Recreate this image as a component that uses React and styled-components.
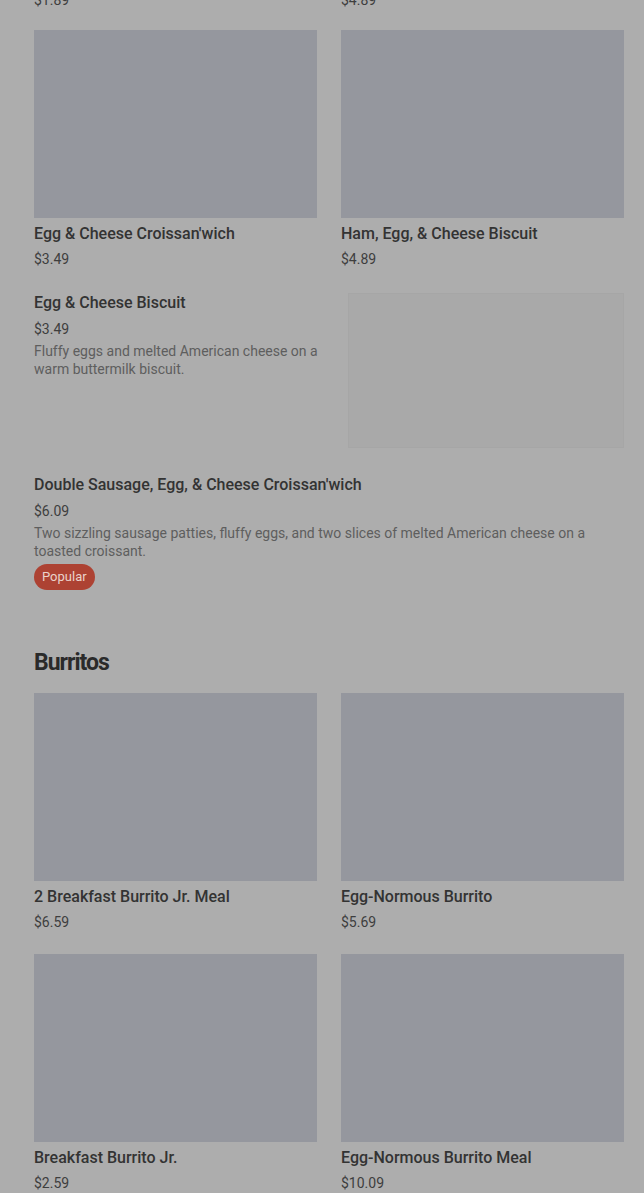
import React from "react"
import styled, { createGlobalStyle } from "styled-components"

const GlobalStyle = createGlobalStyle`
  html, body {
    margin: 0;
    padding: 0;
    background: #adadad;
    font-family: Roboto, "Liberation Sans", sans-serif;
    overflow: hidden;
  }
`

const gridTop = [
  { price: "$1.89" },
  { price: "$4.89" },
]

const gridOne = [
  { name: "Egg & Cheese Croissan'wich", price: "$3.49" },
  { name: "Ham, Egg, & Cheese Biscuit", price: "$4.89" },
]

const burritos = [
  { name: "2 Breakfast Burrito Jr. Meal", price: "$6.59" },
  { name: "Egg-Normous Burrito", price: "$5.69" },
  { name: "Breakfast Burrito Jr.", price: "$2.59" },
  { name: "Egg-Normous Burrito Meal", price: "$10.09" },
]

export default function App() {
  return (
    <>
      <GlobalStyle />
      <Page>
        <Grid $cut>
          {gridTop.map((it, i) => (
            <Price key={i}>{it.price}</Price>
          ))}
        </Grid>

        <Grid>
          {gridOne.map((it) => (
            <Card key={it.name}>
              <Thumb />
              <Title>{it.name}</Title>
              <Price>{it.price}</Price>
            </Card>
          ))}
        </Grid>

        <ListItem>
          <ListText>
            <Title>Egg &amp; Cheese Biscuit</Title>
            <Price $list>$3.49</Price>
            <Desc>Fluffy eggs and melted American cheese on a warm buttermilk biscuit.</Desc>
          </ListText>
          <FaintThumb />
        </ListItem>

        <ListItem $last>
          <ListText>
            <Title>Double Sausage, Egg, &amp; Cheese Croissan'wich</Title>
            <Price $list>$6.09</Price>
            <Desc>Two sizzling sausage patties, fluffy eggs, and two slices of melted American cheese on a toasted croissant.</Desc>
            <Badge>Popular</Badge>
          </ListText>
        </ListItem>

        <Heading>Burritos</Heading>

        <Grid>
          {burritos.map((it) => (
            <Card key={it.name}>
              <Thumb />
              <Title>{it.name}</Title>
              <Price>{it.price}</Price>
            </Card>
          ))}
        </Grid>
      </Page>
    </>
  )
}

const Page = styled.div`
  width: 644px;
  height: 1193px;
  overflow: hidden;
  box-sizing: border-box;
  padding: 0 20px 0 34px;
`

const Grid = styled.div`
  display: grid;
  grid-template-columns: 283px 283px;
  column-gap: 24px;
  row-gap: 22px;
  margin-top: ${(p) => (p.$cut ? "-15px" : "0")};
  margin-bottom: ${(p) => (p.$cut ? "20px" : "24px")};
`

const Card = styled.div`
  display: flex;
  flex-direction: column;
`

const Thumb = styled.div`
  height: 188px;
  background: #95979e;
  margin-bottom: 6px;
`

const Title = styled.div`
  font-size: 16px;
  line-height: 20px;
  font-weight: 500;
  color: #333333;
`

const Price = styled.div`
  font-size: 14px;
  line-height: 20px;
  color: #3e3e3e;
  margin-top: ${(p) => (p.$list ? "6px" : "5px")};
`

const Desc = styled.div`
  font-size: 14px;
  line-height: 18px;
  color: #5e5e5e;
  margin-top: 3px;
  padding-right: 4px;
`

const ListItem = styled.div`
  display: flex;
  gap: 14px;
  margin-bottom: ${(p) => (p.$last ? "59px" : "27px")};
`

const ListText = styled.div`
  flex: 1;
  display: flex;
  flex-direction: column;
  align-items: flex-start;
`

const FaintThumb = styled.div`
  width: 276px;
  height: 155px;
  flex-shrink: 0;
  background: #a9a9a9;
  box-shadow: inset 0 0 0 1px #a6a6a6;
`

const Badge = styled.span`
  margin-top: 4px;
  height: 26px;
  padding: 0 8px;
  border-radius: 13px;
  background: #ad4233;
  color: #ead2cb;
  font-size: 13px;
  line-height: 26px;
`

const Heading = styled.h2`
  margin: 0 0 16px;
  font-size: 23px;
  line-height: 28px;
  font-weight: 700;
  color: #2a2a2a;
  letter-spacing: -1px;
`
